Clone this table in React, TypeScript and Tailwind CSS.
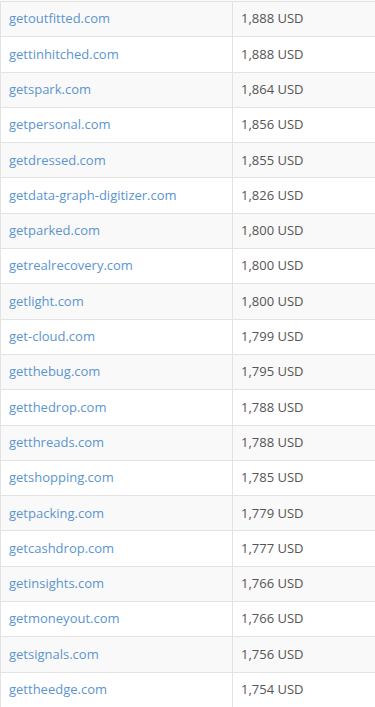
const rows: [string, string][] = [
  ["getoutfitted.com", "1,888 USD"],
  ["gettinhitched.com", "1,888 USD"],
  ["getspark.com", "1,864 USD"],
  ["getpersonal.com", "1,856 USD"],
  ["getdressed.com", "1,855 USD"],
  ["getdata-graph-digitizer.com", "1,826 USD"],
  ["getparked.com", "1,800 USD"],
  ["getrealrecovery.com", "1,800 USD"],
  ["getlight.com", "1,800 USD"],
  ["get-cloud.com", "1,799 USD"],
  ["getthebug.com", "1,795 USD"],
  ["getthedrop.com", "1,788 USD"],
  ["getthreads.com", "1,788 USD"],
  ["getshopping.com", "1,785 USD"],
  ["getpacking.com", "1,779 USD"],
  ["getcashdrop.com", "1,777 USD"],
  ["getinsights.com", "1,766 USD"],
  ["getmoneyout.com", "1,766 USD"],
  ["getsignals.com", "1,756 USD"],
  ["gettheedge.com", "1,754 USD"],
];

export default function App() {
  return (
    <div className="w-[375px] h-[707px] overflow-hidden bg-white font-['Open_Sans',sans-serif] text-[13px]">
      <div className="h-px bg-[#fafafa]" />
      <div className="border-l border-[#e3e3e3]">
        {rows.map(([domain, price], i) => (
          <div
            key={domain}
            className={`flex h-[35.3px] border-t border-[#e3e3e3] ${i % 2 === 0 ? "bg-[#f9f9f9]" : "bg-white"}`}
          >
            <div className="w-[232px] shrink-0 border-r border-[#e3e3e3] px-2 flex items-center">
              <a href="#" className="text-[#5b95cf]">{domain}</a>
            </div>
            <div className="flex-1 px-2 flex items-center text-[#555]">{price}</div>
          </div>
        ))}
      </div>
    </div>
  );
}
